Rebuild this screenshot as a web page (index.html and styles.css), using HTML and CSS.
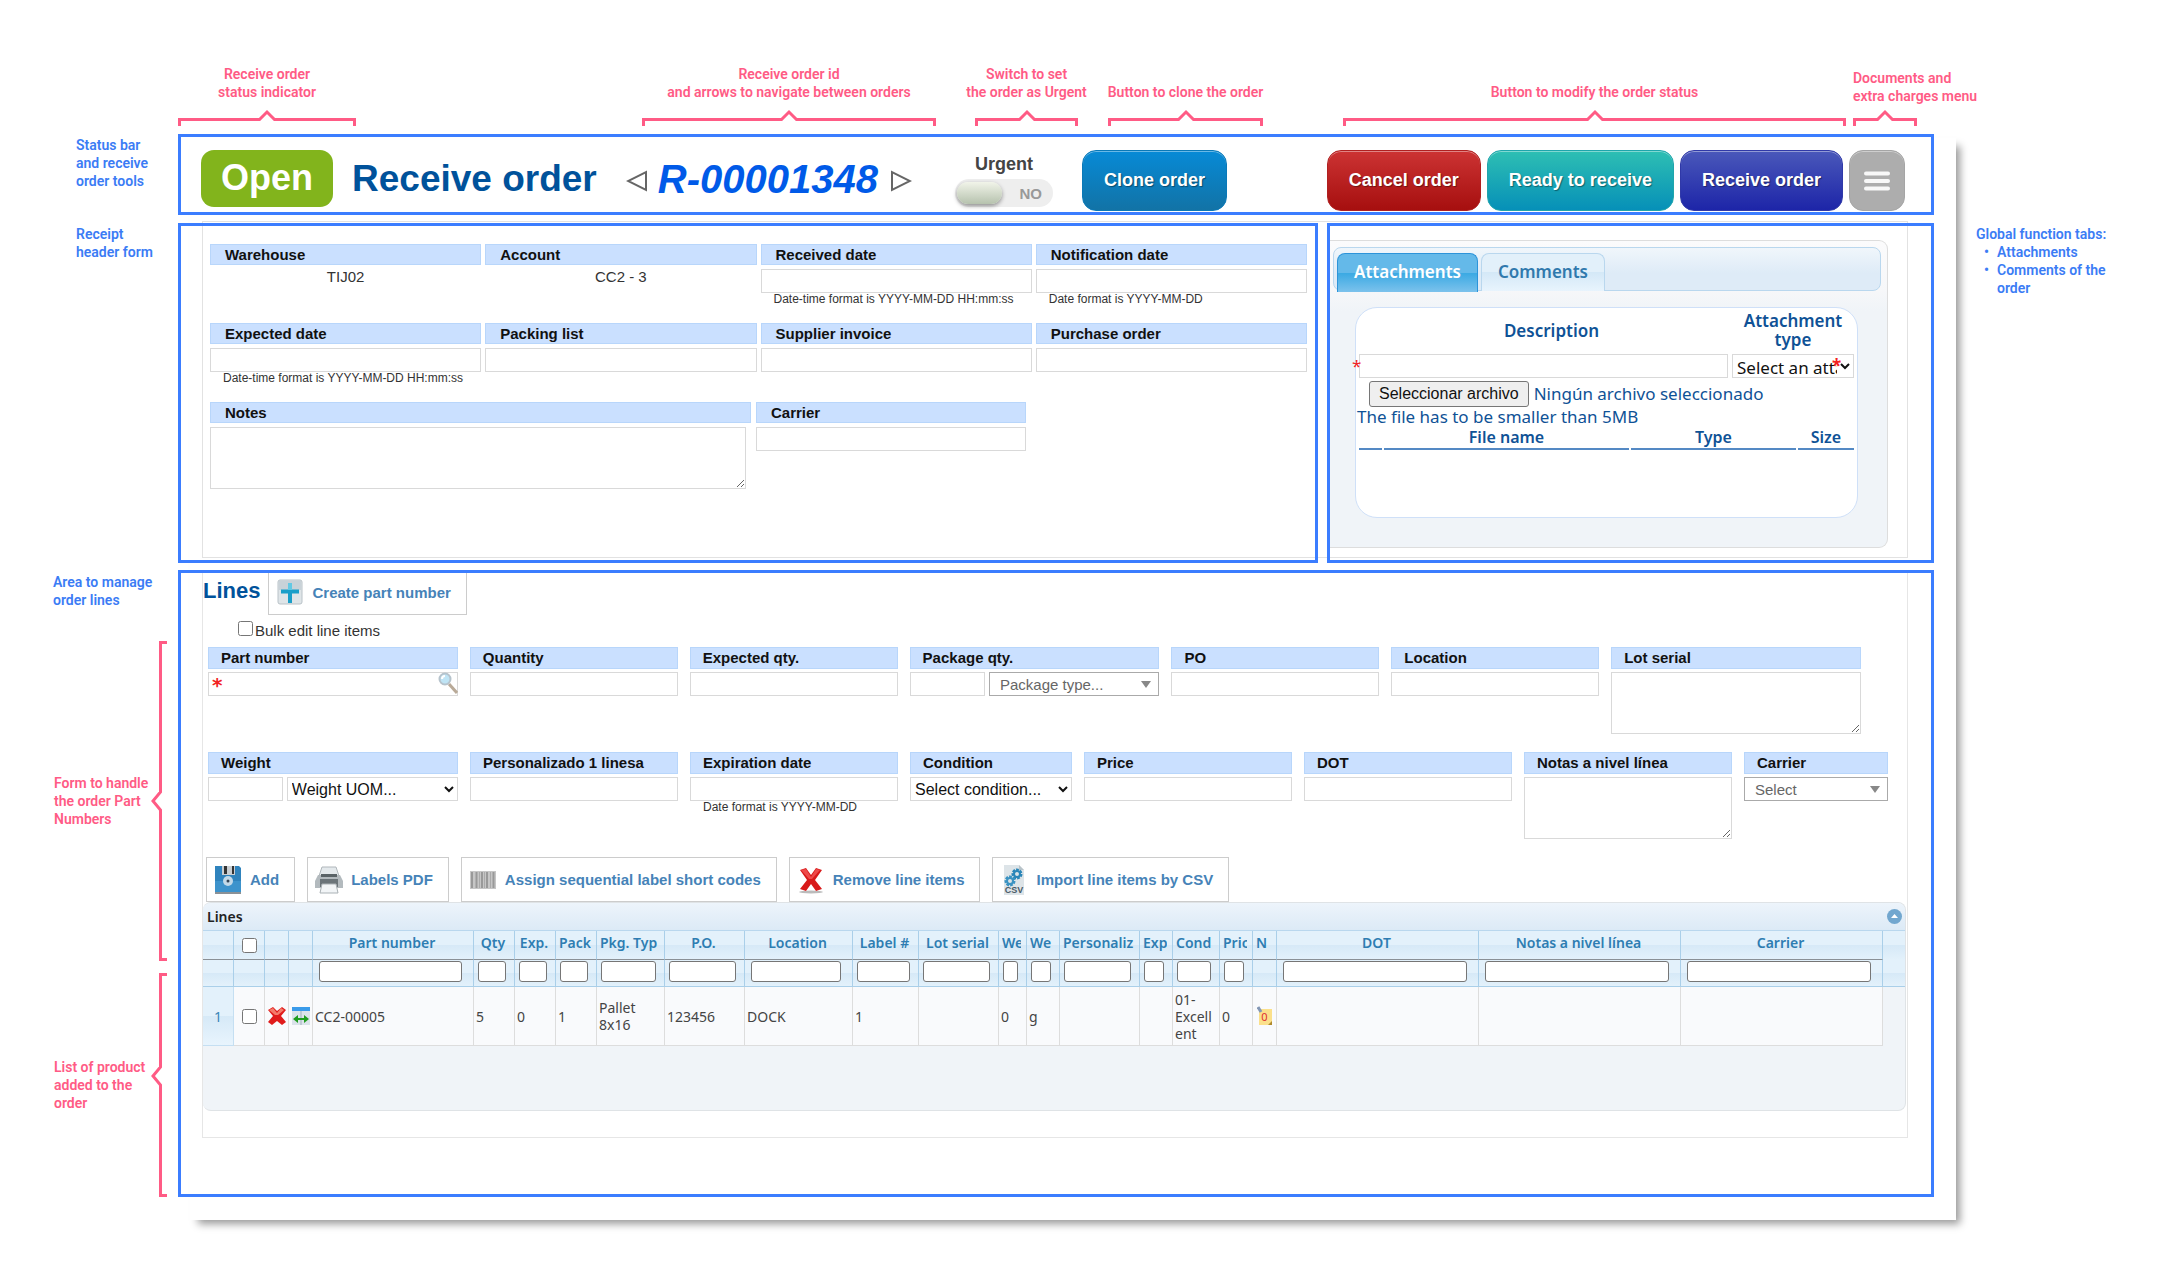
FILE: index.html
```html
<!DOCTYPE html>
<html lang="en">
<head>
    <meta charset="UTF-8">
    <title>Receive order R-00001348</title>
    <meta name="viewport" content="width=device-width, initial-scale=1">
    <link rel="stylesheet" href="styles.css">
</head>
<body>
    <div class="guide">
        <!-- callouts over the toolbar -->
        <div class="callouts">
            <div class="callout c-status">
                <p>Receive order<br>status indicator</p>
                <div class="bracket"><i></i><svg width="18" height="11" viewBox="0 0 18 11"><path d="M0 9.5h1.5L9 2l7.500 7.500H18"/></svg><i></i></div>
            </div>
            <div class="callout c-id">
                <p>Receive order id<br>and arrows to navigate between orders</p>
                <div class="bracket"><i></i><svg width="18" height="11" viewBox="0 0 18 11"><path d="M0 9.5h1.5L9 2l7.500 7.500H18"/></svg><i></i></div>
            </div>
            <div class="callout c-urgent">
                <p>Switch to set<br>the order as Urgent</p>
                <div class="bracket"><i></i><svg width="18" height="11" viewBox="0 0 18 11"><path d="M0 9.5h1.5L9 2l7.500 7.500H18"/></svg><i></i></div>
            </div>
            <div class="callout c-clone">
                <p>Button to clone the order</p>
                <div class="bracket"><i></i><svg width="18" height="11" viewBox="0 0 18 11"><path d="M0 9.5h1.5L9 2l7.500 7.500H18"/></svg><i></i></div>
            </div>
            <div class="callout c-modify">
                <p>Button to modify the order status</p>
                <div class="bracket"><i></i><svg width="18" height="11" viewBox="0 0 18 11"><path d="M0 9.5h1.5L9 2l7.500 7.500H18"/></svg><i></i></div>
            </div>
            <div class="callout c-docs">
                <p>Documents and<br>extra charges menu</p>
                <div class="bracket"><i></i><svg width="18" height="11" viewBox="0 0 18 11"><path d="M0 9.5h1.5L9 2l7.500 7.500H18"/></svg><i></i></div>
            </div>
        </div>

        <div class="sheet"></div>

        <p class="note note-status">Status bar<br>and receive<br>order tools</p>

        <header class="frame toolbar">
            <span class="status">Open</span>
            <h1>Receive order</h1>
            <div class="order-nav">
                <a href="#prev" aria-label="Previous order"><svg width="22" height="22" viewBox="0 0 22 22"><path d="M20 2v18L2 11z"/></svg></a>
                <strong>R-00001348</strong>
                <a href="#next" aria-label="Next order"><svg width="22" height="22" viewBox="0 0 22 22"><path d="M2 2v18l18-9z"/></svg></a>
            </div>
            <div class="urgent">
                <label for="urgent">Urgent</label>
                <span class="switch">
                    <input type="checkbox" id="urgent">
                    <span class="knob"></span>
                    <span class="no">NO</span>
                </span>
            </div>
            <button class="btn btn-clone">Clone order</button>
            <div class="actions">
                <button class="btn btn-cancel">Cancel order</button>
                <button class="btn btn-ready">Ready to receive</button>
                <button class="btn btn-receive">Receive order</button>
                <button class="btn btn-menu" aria-label="Menu"><svg width="28" height="24" viewBox="0 0 28 24"><path d="M3 4.500h22M3 12h22M3 19.500h22"/></svg></button>
            </div>
        </header>

        <p class="note note-receipt">Receipt<br>header form</p>

        <div class="split">
            <form class="frame header-form">
                <div class="fields">
                    <div class="field"><span class="label">Warehouse</span><span class="static">TIJ02</span></div>
                    <div class="field"><span class="label">Account</span><span class="static">CC2 - 3</span></div>
                    <div class="field"><label for="received">Received date</label><input type="text" id="received"><small>Date-time format is YYYY-MM-DD HH:mm:ss</small></div>
                    <div class="field"><label for="notification">Notification date</label><input type="text" id="notification"><small>Date format is YYYY-MM-DD</small></div>
                    <div class="field"><label for="expected">Expected date</label><input type="text" id="expected"><small>Date-time format is YYYY-MM-DD HH:mm:ss</small></div>
                    <div class="field"><label for="packing">Packing list</label><input type="text" id="packing"></div>
                    <div class="field"><label for="invoice">Supplier invoice</label><input type="text" id="invoice"></div>
                    <div class="field"><label for="purchase">Purchase order</label><input type="text" id="purchase"></div>
                </div>
                <div class="fields fields-notes">
                    <div class="field notes"><label for="notes">Notes</label><textarea id="notes"></textarea></div>
                    <div class="field"><label for="carrier">Carrier</label><input type="text" id="carrier"></div>
                </div>
            </form>

            <div class="frame tabs-frame">
                <div class="tabs">
                    <nav>
                        <a class="active" href="#attachments">Attachments</a>
                        <a href="#comments">Comments</a>
                    </nav>
                    <div class="attachments" id="attachments">
                        <div class="attach-row">
                            <label class="desc" for="description">Description</label>
                            <label for="attach-type">Attachment type</label>
                            <span class="required"><b>*</b><input type="text" id="description"></span>
                            <span class="required req-right"><select id="attach-type"><option>Select an attachment type</option></select><b>*</b></span>
                        </div>
                        <div class="file-row">
                            <button type="button">Seleccionar archivo</button>
                            <span>Ningún archivo seleccionado</span>
                        </div>
                        <p>The file has to be smaller than 5MB</p>
                        <table class="files">
                            <thead>
                                <tr><th class="w-pick"></th><th class="w-name">File name</th><th class="w-type">Type</th><th>Size</th></tr>
                            </thead>
                        </table>
                    </div>
                </div>
            </div>
        </div>

        <div class="note note-right">
            Global function tabs:
            <ul>
                <li>Attachments</li>
                <li>Comments of the order</li>
            </ul>
        </div>

        <div class="line-notes">
            <p>Area to manage<br>order lines</p>
            <div class="side side-form">
                <p>Form to handle<br>the order Part<br>Numbers</p>
                <div class="v-bracket"><i></i><svg width="11" height="20" viewBox="0 0 11 20"><path d="M9.500 0v1L2 10l7.500 9v1"/></svg><i></i></div>
            </div>
            <div class="side side-list">
                <p>List of product<br>added to the<br>order</p>
                <div class="v-bracket"><i></i><svg width="11" height="20" viewBox="0 0 11 20"><path d="M9.500 0v1L2 10l7.500 9v1"/></svg><i></i></div>
            </div>
        </div>

        <section class="frame lines">
            <div class="lines-panel">
                <div class="lines-head">
                    <h2>Lines</h2>
                    <button class="tool">
                        <svg width="28" height="28" viewBox="0 0 28 28"><rect x="2" y="2" width="24" height="24" rx="2" fill="#dfe5e8" stroke="#b9c2c8"/><path d="M3 3h22v9H3z" fill="#c9d2d8"/><path d="M14 5v20M5 13.500h18" stroke="#1b9fc9" stroke-width="4"/><path d="M14 5v7" stroke="#63c9e4" stroke-width="4"/></svg>
                        Create part number
                    </button>
                </div>
                <div class="bulk"><input type="checkbox" id="bulk"><label for="bulk">Bulk edit line items</label></div>

                <form class="line-form">
                    <div class="row row-short">
                        <div class="field wide"><label for="part">Part number</label>
                            <span class="search">
                                <b>*</b><input type="text" id="part">
                                <svg width="20" height="24" viewBox="0 0 20 24"><path d="M11 12l8 9" stroke="#b9aa98" stroke-width="3"/><circle cx="7" cy="7" r="5.500" fill="#bfe4f5" stroke="#b6c3cc" stroke-width="2"/><path d="M4 7a3 3 0 0 1 3-3" stroke="#fff" stroke-width="2" fill="none"/></svg>
                            </span>
                        </div>
                        <div class="field"><label for="qty">Quantity</label><input type="text" id="qty"></div>
                        <div class="field"><label for="exp-qty">Expected qty.</label><input type="text" id="exp-qty"></div>
                        <div class="field wide"><label for="pkg-qty">Package qty.</label>
                            <div class="pair">
                                <input type="text" id="pkg-qty">
                                <span class="combo"><select aria-label="Package type"><option>Package type...</option></select></span>
                            </div>
                        </div>
                        <div class="field"><label for="po">PO</label><input type="text" id="po"></div>
                        <div class="field"><label for="location">Location</label><input type="text" id="location"></div>
                        <div class="field wide"><label for="lot">Lot serial</label><textarea id="lot"></textarea></div>
                    </div>
                    <div class="row">
                        <div class="field wide"><label for="weight">Weight</label>
                            <div class="pair">
                                <input type="text" id="weight">
                                <select aria-label="Weight UOM"><option>Weight UOM...</option></select>
                            </div>
                        </div>
                        <div class="field"><label for="custom1">Personalizado 1 linesa</label><input type="text" id="custom1"></div>
                        <div class="field"><label for="expiration">Expiration date</label><input type="text" id="expiration"><small>Date format is YYYY-MM-DD</small></div>
                        <div class="field condition"><label for="condition">Condition</label><select id="condition"><option>Select condition...</option></select></div>
                        <div class="field"><label for="price">Price</label><input type="text" id="price"></div>
                        <div class="field"><label for="dot">DOT</label><input type="text" id="dot"></div>
                        <div class="field"><label for="line-notes">Notas a nivel línea</label><textarea id="line-notes"></textarea></div>
                        <div class="field narrow"><label for="line-carrier">Carrier</label><span class="combo"><select id="line-carrier"><option>Select</option></select></span></div>
                    </div>
                </form>

                <div class="tools">
                    <button class="tool">
                        <svg width="28" height="30" viewBox="0 0 28 30"><path d="M1 26h26v3H1z" fill="#8b9196"/><path d="M2 1h23l2 2v24H1V1z" fill="#2f83bd"/><path d="M1 16h26v11H1z" fill="#3d93cc"/><path d="M8 1h13v9H8z" fill="#c9ced2"/><path d="M10 1h3v8h-3zM18 1h2v8h-2z" fill="#333"/><circle cx="14" cy="16" r="5" fill="#c3d9e8"/><circle cx="14" cy="16" r="1.500" fill="#345"/></svg>
                        Add
                    </button>
                    <button class="tool">
                        <svg width="28" height="30" viewBox="0 0 28 30"><path d="M7 2h14l3 9H4z" fill="#e4e9ec" stroke="#b0b7bb"/><path d="M3 10h22l3 6v7H0v-7z" fill="#b3babe"/><path d="M6 9h16v3H6z" fill="#5a6367"/><path d="M5 14h18v8H5z" fill="#6b7479"/><path d="M7 19h14l2 9H5z" fill="#f2f5f7" stroke="#aab1b5"/></svg>
                        Labels PDF
                    </button>
                    <button class="tool">
                        <svg width="28" height="30" viewBox="0 0 28 30"><path d="M1 6h26v18H1z" fill="#c6c6c6"/><path d="M3 7v16M7.500 7v16M13 7v16M18 7v16M24.500 7v16" stroke="#999" stroke-width="2"/><path d="M10.500 7v16M15.500 7v16M21.500 7v16" stroke="#aaa"/></svg>
                        Assign sequential label short codes
                    </button>
                    <button class="tool">
                        <svg width="28" height="30" viewBox="0 0 28 30"><ellipse cx="14" cy="27" rx="12" ry="1.500" fill="#bbb"/><path d="M3 5l6-2 5 7 5-7 6 2-7 10 7 9-6 2-5-7-5 7-6-2 7-9z" fill="#d81a1a"/><path d="M4 5l5-1 5 8 5-8 4 1-8 9h-3z" fill="#ee4a4a"/></svg>
                        Remove line items
                    </button>
                    <button class="tool">
                        <svg width="28" height="32" viewBox="0 0 28 32"><path d="M4 1h15l5 5v25H4z" fill="#dde4e8"/><path d="M19 1v5h5z" fill="#b8c3c9"/><circle cx="17" cy="10" r="4" fill="none" stroke="#2b86b8" stroke-width="3" stroke-dasharray="2.500 1"/><circle cx="17" cy="10" r="3" fill="none" stroke="#2b86b8" stroke-width="2"/><circle cx="10" cy="17" r="4" fill="none" stroke="#3b93c2" stroke-width="3" stroke-dasharray="2.500 1"/><circle cx="10" cy="17" r="3" fill="none" stroke="#3b93c2" stroke-width="2"/><text x="14" y="29" text-anchor="middle">CSV</text></svg>
                        Import line items by CSV
                    </button>
                </div>

                <div class="grid-view">
                    <div class="grid-title">
                        <span>Lines</span>
                        <button aria-label="Collapse"><svg width="15" height="15" viewBox="0 0 15 15"><circle cx="7.500" cy="7.500" r="7.500" fill="#72a7cf"/><path d="M4 9l3.500-4L11 9z" fill="#fff"/></svg></button>
                    </div>
                    <table class="grid">
                        <colgroup>
                            <col class="w31"><col class="w31"><col class="w24"><col class="w24"><col class="w161"><col class="w41"><col class="w41"><col class="w41"><col class="w68"><col class="w80"><col class="w108"><col class="w66"><col class="w80"><col class="w28"><col class="w33"><col class="w80"><col class="w33"><col class="w47"><col class="w33"><col class="w24"><col><col><col><col class="w22">
                        </colgroup>
                        <thead>
                            <tr>
                                <th></th>
                                <th><input type="checkbox" aria-label="Select all"></th>
                                <th></th>
                                <th></th>
                                <th>Part number</th>
                                <th>Qty</th>
                                <th>Exp.</th>
                                <th><div>Pack</div></th>
                                <th><div>Pkg. Typ</div></th>
                                <th>P.O.</th>
                                <th>Location</th>
                                <th>Label #</th>
                                <th>Lot serial</th>
                                <th><div>We</div></th>
                                <th><div>We</div></th>
                                <th><div>Personaliz</div></th>
                                <th><div>Exp</div></th>
                                <th><div>Cond</div></th>
                                <th><div>Pric</div></th>
                                <th><div>N</div></th>
                                <th>DOT</th>
                                <th>Notas a nivel línea</th>
                                <th>Carrier</th>
                                <th class="rest"></th>
                            </tr>
                            <tr class="filters">
                                <td></td>
                                <td></td>
                                <td></td>
                                <td></td>
                                <td class="roomy"><input type="text" aria-label="Part number"></td>
                                <td><input type="text" aria-label="Qty"></td>
                                <td><input type="text" aria-label="Exp."></td>
                                <td><input type="text" aria-label="Pack"></td>
                                <td><input type="text" aria-label="Pkg. Type"></td>
                                <td><input type="text" aria-label="P.O."></td>
                                <td class="roomy"><input type="text" aria-label="Location"></td>
                                <td><input type="text" aria-label="Label #"></td>
                                <td><input type="text" aria-label="Lot serial"></td>
                                <td><input type="text" aria-label="Weight"></td>
                                <td><input type="text" aria-label="Weight UOM"></td>
                                <td><input type="text" aria-label="Personalizado"></td>
                                <td><input type="text" aria-label="Expiration"></td>
                                <td><input type="text" aria-label="Condition"></td>
                                <td><input type="text" aria-label="Price"></td>
                                <td></td>
                                <td class="roomy"><input type="text" aria-label="DOT"></td>
                                <td class="roomy"><input type="text" aria-label="Notas a nivel línea"></td>
                                <td class="roomy"><input type="text" aria-label="Carrier"></td>
                                <td class="rest"></td>
                            </tr>
                        </thead>
                        <tbody>
                            <tr>
                                <td class="num">1</td>
                                <td class="mid"><input type="checkbox" aria-label="Select line 1"></td>
                                <td class="mid"><svg width="20" height="20" viewBox="0 0 20 20"><path d="M1 4l5-3 4 4 5-4 4 3-5 6 5 6-4 3-5-4-5 4-4-3 5-6z" fill="#e01b1b"/><path d="M2 4l4-2 4 5 4-5 3 2-6 5H8z" fill="#f47a6a"/></svg></td>
                                <td class="mid"><svg width="18" height="18" viewBox="0 0 18 18"><rect width="18" height="18" fill="#dbe3ea"/><path d="M0 0h18v4H0z" fill="#3a9bea"/><path d="M9 4v14" stroke="#9fb0bd"/><path d="M1 12l5-4v3h6V8l5 4-5 4v-3H6v3z" fill="#1f9d1f"/></svg></td>
                                <td>CC2-00005</td>
                                <td>5</td>
                                <td>0</td>
                                <td>1</td>
                                <td>Pallet 8x16</td>
                                <td>123456</td>
                                <td>DOCK</td>
                                <td>1</td>
                                <td></td>
                                <td>0</td>
                                <td>g</td>
                                <td></td>
                                <td></td>
                                <td>01-Excellent</td>
                                <td>0</td>
                                <td class="mid"><span class="sticky"><svg width="16" height="20" viewBox="0 0 16 20"><path d="M2 3h13v16H2z" fill="#fbe08b"/><path d="M15 15v4h-4z" fill="#b08a2c"/><path d="M1 1l3 5" stroke="#8397b5" stroke-width="3"/></svg><em>0</em></span></td>
                                <td></td>
                                <td></td>
                                <td></td>
                                <td class="rest"></td>
                            </tr>
                        </tbody>
                    </table>
                </div>
            </div>
        </section>
    </div>
</body>
</html>
```
FILE: styles.css
```css
* {
    box-sizing: border-box;
}
body {
    margin: 0;
    background: #ffffff;
    font-family: "Liberation Sans", Arial, sans-serif;
    font-size: 15px;
    color: #333333;
}
p, h1, h2, ul {
    margin: 0;
    padding: 0;
}
input, select, textarea, button {
    font-family: inherit;
    margin: 0;
}
.guide {
    display: grid;
    grid-template-columns: 178px 1fr 232px;
    row-gap: 8px;
    padding-bottom: 60px;
}

/* callouts and notes */
.callouts, .note, .line-notes {
    font-family: Roboto, sans-serif;
    font-size: 14px;
    font-weight: 600;
    line-height: 18px;
}
.callouts {
    grid-column: 2;
    grid-row: 1;
    display: grid;
    grid-template-columns: 178fr 286fr 294fr 39fr 103fr 30fr 155fr 80fr 503fr 7fr 64fr 17fr;
    align-items: end;
    height: 126px;
    color: #ff5b85;
}
.callout {
    display: flex;
    flex-direction: column;
    align-items: center;
    gap: 10px;
    min-width: 0;
    text-align: center;
    white-space: nowrap;
}
.c-status { grid-column: 1; }
.c-id { grid-column: 3; }
.c-urgent { grid-column: 5; }
.c-clone { grid-column: 7; }
.c-modify { grid-column: 9; }
.c-docs {
    grid-column: 11;
    align-items: flex-start;
    gap: 6px;
    text-align: left;
}
.bracket {
    display: flex;
    align-items: flex-start;
    width: 100%;
    height: 15px;
}
.bracket i {
    flex: 1;
    height: 8px;
    margin-top: 7px;
    border-top: 3px solid #ff5b85;
    border-left: 3px solid #ff5b85;
}
.bracket svg + i {
    border-left: 0;
    border-right: 3px solid #ff5b85;
}
.bracket path, .v-bracket path {
    fill: none;
    stroke: #ff5b85;
    stroke-width: 3;
}
.bracket svg {
    overflow: visible;
    margin-top: -1px;
}
.note {
    color: #3b7cf5;
}
.note-status, .note-receipt {
    grid-column: 1;
    grid-row: 2;
    padding: 2px 0 0 76px;
}
.note-receipt {
    grid-row: 3;
}
.note-right {
    grid-column: 3;
    grid-row: 3;
    padding: 2px 50px 0 42px;
    z-index: 1;
}
.note-right ul {
    padding-left: 21px;
    list-style: none;
}
.note-right li {
    position: relative;
}
.note-right li::before {
    content: "•";
    position: absolute;
    left: -13px;
}
.line-notes {
    grid-column: 1;
    grid-row: 4;
    display: flex;
    flex-direction: column;
    padding-top: 2px;
}
.line-notes > p {
    padding-left: 53px;
    color: #3b7cf5;
}
.side {
    display: flex;
    align-items: center;
    justify-content: space-between;
    padding: 0 11px 0 54px;
    color: #ff5b85;
}
.side-form {
    height: 320px;
    margin: 32px 0 12px;
}
.side-list {
    flex: 1;
}
.side p {
    white-space: nowrap;
}
.v-bracket {
    display: flex;
    flex-direction: column;
    align-items: flex-start;
    align-self: stretch;
    width: 16px;
}
.v-bracket i {
    flex: 1;
    width: 8px;
    margin-left: 8px;
    border-top: 3px solid #ff5b85;
    border-left: 3px solid #ff5b85;
}
.v-bracket svg + i {
    border-top: 0;
    border-bottom: 3px solid #ff5b85;
}
.side-list .v-bracket i {
    flex: 10;
}
.side-list .v-bracket svg + i {
    flex: 12;
}

/* the sheet lies behind all the frames */
.sheet {
    grid-column: 2;
    grid-row: 2 / 5;
    margin: 4px -22px -23px 12px;
    background: #ffffff;
    box-shadow: 6px 6px 8px -2px rgba(0, 0, 0, 0.4);
}
.frame {
    border: 3px solid #3b7dff;
}

/* toolbar */
.toolbar {
    grid-column: 2;
    grid-row: 2;
    display: flex;
    align-items: center;
    height: 81px;
    padding: 12px 26px 0 20px;
    z-index: 1;
}
.status {
    width: 132px;
    height: 57px;
    margin-bottom: 4px;
    border-radius: 13px;
    background: #82b41c;
    color: #ffffff;
    font-size: 36px;
    font-weight: bold;
    line-height: 55px;
    text-align: center;
}
.toolbar h1 {
    margin: 0 29px 4px 19px;
    color: #00529b;
    font-size: 37px;
    line-height: 44px;
    white-space: nowrap;
}
.order-nav {
    display: flex;
    align-items: center;
    gap: 10px;
}
.order-nav a {
    height: 22px;
}
.order-nav path {
    fill: #ffffff;
    stroke: #666666;
    stroke-width: 2;
}
.order-nav strong {
    margin: 0 2px 4px 0;
    color: #005ae8;
    font-size: 40px;
    font-style: italic;
    line-height: 44px;
}
.urgent {
    display: flex;
    flex-direction: column;
    align-items: center;
    gap: 4px;
    margin: 0 29px 0 43px;
    color: #444444;
    font-size: 18px;
    font-weight: bold;
}
.switch {
    position: relative;
    display: flex;
    align-items: center;
    justify-content: space-between;
    width: 98px;
    height: 28px;
    padding: 0 11px 0 2px;
    border-radius: 14px;
    background: #eeeeee;
}
.switch input {
    position: absolute;
    inset: 0;
    width: 100%;
    height: 100%;
    opacity: 0;
}
.knob {
    width: 45px;
    height: 22px;
    border-radius: 11px;
    background: linear-gradient(#f1f4e9, #b6c2ae);
    box-shadow: 0 2px 4px rgba(0, 0, 0, 0.4);
}
.no {
    color: #999999;
    font-size: 15px;
}
.actions {
    display: flex;
    gap: 6px;
    margin-left: auto;
}
.btn {
    height: 61px;
    padding: 0 21px;
    border: 1px solid;
    border-radius: 14px;
    color: #ffffff;
    font-size: 18px;
    font-weight: bold;
    text-shadow: 1px 1px 1px rgba(0, 0, 0, 0.4);
    box-shadow: inset 0 1px 0 rgba(255, 255, 255, 0.4);
    white-space: nowrap;
}
.btn-clone {
    border-color: #0a79b8;
    background: linear-gradient(#078ad6, #1273a6);
}
.btn-cancel {
    border-color: #b02020;
    background: linear-gradient(#cc3333, #a60f0f);
}
.btn-ready {
    border-color: #1fa5ac;
    background: linear-gradient(#2ebfb3, #0690b8);
}
.btn-receive {
    border-color: #3039a8;
    background: linear-gradient(#4a58ba, #1d25a8);
}
.btn-menu {
    width: 56px;
    padding: 0 13px;
    border-color: #a5a5a5;
    background: #adadad;
}
.btn-menu svg {
    display: block;
}
.btn-menu path {
    stroke: #f8f8f8;
    stroke-width: 4;
    stroke-linecap: round;
}

/* fields */
.field {
    min-width: 0;
}
.field label, .field .label {
    display: block;
    height: 21px;
    margin-bottom: 4px;
    padding-left: 14px;
    border: 1px solid #b8d6fb;
    background: #cae0ff;
    color: #111111;
    font-weight: bold;
    line-height: 19px;
    white-space: nowrap;
}
.field input, .field textarea, .field select {
    display: block;
    width: 100%;
    height: 24px;
    border: 1px solid #d9d9d9;
    background: #ffffff;
    font-size: 15px;
}
.field textarea {
    height: 62px;
}
.field select {
    font-size: 16px;
    color: #111111;
}
.field small {
    display: block;
    padding-left: 13px;
    font-size: 12px;
    line-height: 13px;
    white-space: nowrap;
}
.static {
    display: block;
    text-align: center;
    line-height: 16px;
}

/* receipt header */
.split {
    grid-column: 2;
    grid-row: 3;
    position: relative;
    display: grid;
    grid-template-columns: 1140fr 607fr;
    gap: 9px;
    height: 340px;
}
.split::before {
    content: "";
    position: absolute;
    inset: -2px 26px 5px 24px;
    border: 1px solid #e2e2e2;
}
.split .frame {
    position: relative;
}
.header-form {
    padding: 18px 8px 0 29px;
}
.fields {
    display: grid;
    grid-template-columns: repeat(4, 1fr);
    grid-auto-rows: 79px;
    column-gap: 4px;
}
.fields-notes {
    grid-template-columns: 541fr 270fr 276fr;
    column-gap: 5px;
}
.notes textarea {
    width: calc(100% - 5px);
}

/* attachments */
.tabs-frame {
    padding: 14px 43px 12px 0;
    color: #0f5296;
    font-family: "Noto Sans", "Open Sans", sans-serif;
    font-size: 15px;
}
.tabs {
    height: 308px;
    padding: 6px 6px 0 3px;
    border: 1px solid #dddddd;
    border-left: 0;
    border-radius: 0 9px 9px 0;
    background: linear-gradient(#fbfbfc, #f6f7f9 50px, #f0f4f8 70px);
}
.tabs nav {
    display: flex;
    align-items: flex-start;
    gap: 3px;
    height: 44px;
    padding: 5px 3px 0;
    border: 1px solid #b9d7ee;
    border-radius: 8px;
    background: linear-gradient(#f0f6fb, #deebf7 60%);
}
.tabs nav a {
    height: 38px;
    padding: 0 16px;
    border: 1px solid #b9d7ee;
    border-bottom: 0;
    border-radius: 8px 8px 0 0;
    background: linear-gradient(#e2f0fa 50%, #d4e8f7 50%, #e8f4fd);
    color: #3079ad;
    font-size: 17px;
    font-weight: 600;
    line-height: 36px;
    text-decoration: none;
}
.tabs nav .active {
    height: 39px;
    border-color: #2c94da;
    background: linear-gradient(#64b9e9 50%, #3aa9e3 50%, #7cc2ec);
    color: #ffffff;
}
.attachments {
    height: 211px;
    margin: 16px 23px 0 22px;
    padding: 3px 1px 0;
    border: 1px solid #cfe0f8;
    border-radius: 22px;
    background: #ffffff;
}
.attach-row {
    display: grid;
    grid-template-columns: 1fr 122px;
    align-items: center;
    column-gap: 4px;
    padding: 0 2px;
}
.attach-row label {
    font-size: 17px;
    font-weight: 600;
    line-height: 19px;
    text-align: center;
}
.attach-row .desc {
    padding-left: 16px;
}
.required {
    position: relative;
    display: block;
    margin-top: 5px;
}
.required b {
    position: absolute;
    left: -7px;
    top: 0;
    color: #f22222;
    font-size: 17px;
    font-weight: normal;
}
.req-right b {
    left: 100px;
    font-weight: bold;
}
.required input, .required select {
    display: block;
    width: 100%;
    height: 24px;
    border: 1px solid #d9d9d9;
    background: #ffffff;
    color: #111111;
    font-size: 15px;
}
.required select {
    font-size: 17px;
}
.file-row {
    display: flex;
    align-items: center;
    gap: 5px;
    margin: 3px 0 0 12px;
}
.file-row button {
    height: 26px;
    padding: 0 9px;
    border: 1px solid #767676;
    border-radius: 3px;
    background: #efefef;
    color: #111111;
    font-family: "Liberation Sans", Arial, sans-serif;
    font-size: 16px;
}
.file-row span, .attachments p {
    font-size: 17px;
    line-height: 20px;
}
.files {
    width: 100%;
    border-spacing: 2px 0;
    table-layout: fixed;
}
.files th {
    height: 23px;
    padding: 0;
    border-bottom: 2px solid #5489c4;
    font-size: 16px;
    font-weight: 600;
    line-height: 21px;
}
.w-pick { width: 23px; }
.w-name { width: 245px; }
.w-type { width: 165px; }

/* lines */
.lines {
    grid-column: 2;
    grid-row: 4;
    position: relative;
    margin-top: -1px;
    padding: 0 23px 56px 21px;
}
.lines-panel {
    border: 1px solid #e6e6e6;
    border-top: 0;
    padding-bottom: 26px;
}
.lines-head {
    display: flex;
    align-items: flex-start;
    gap: 8px;
}
.lines-head h2 {
    color: #00529b;
    font-size: 22px;
    line-height: 36px;
}
.lines-head .tool {
    height: 42px;
    padding-bottom: 3px;
    border-top: 0;
}
.tool {
    display: flex;
    align-items: center;
    gap: 8px;
    height: 45px;
    padding: 0 15px 0 7px;
    border: 1px solid #cccccc;
    background: #ffffff;
    color: #4683b8;
    font-size: 15px;
    font-weight: bold;
    white-space: nowrap;
}
.tool text {
    fill: #4a5a66;
    font-size: 9px;
    font-weight: bold;
}
.bulk {
    display: flex;
    align-items: center;
    height: 32px;
    padding: 0 0 2px 35px;
}
.bulk input {
    width: 15px;
    height: 15px;
    margin: 0 2px 4px 0;
}
.row {
    display: flex;
    gap: 12px;
    height: 105px;
    padding: 0 19px 0 5px;
}
.row-short {
    padding-right: 46px;
}
.row .field {
    flex: 208 1 0;
}
.row .wide {
    flex-grow: 250;
}
.row .condition {
    flex-grow: 162;
}
.row .narrow {
    flex-grow: 144;
}
.row .field label {
    height: 22px;
    margin-bottom: 3px;
    padding-left: 12px;
    line-height: 20px;
}
.pair {
    display: flex;
    gap: 4px;
}
.pair > input {
    flex: 70 1 0;
    min-width: 0;
}
.pair > span, .pair > select {
    flex: 172 1 0;
    min-width: 0;
}
.combo {
    position: relative;
    display: block;
}
.combo::after {
    content: "";
    position: absolute;
    right: 8px;
    top: 9px;
    border: 5px solid transparent;
    border-top: 7px solid #888888;
    border-bottom: 0;
}
.field .combo select {
    appearance: none;
    padding: 0 10px;
    border-color: #aaaaaa;
    color: #666666;
    font-size: 15px;
}
.search {
    position: relative;
    display: block;
}
.search b {
    position: absolute;
    left: 4px;
    top: 1px;
    color: #f22222;
    font-family: "DejaVu Sans", sans-serif;
    font-size: 20px;
}
.search svg {
    position: absolute;
    right: 0;
    top: 0;
}
.tools {
    display: flex;
    gap: 12px;
    padding-left: 3px;
}

/* grid */
.grid-view {
    min-height: 209px;
    margin-right: 1px;
    border: 1px solid #dfe3e6;
    border-left: 0;
    border-radius: 8px;
    background: #f0f4f8;
    font-family: "Noto Sans", "Open Sans", sans-serif;
    overflow: hidden;
}
.grid-title {
    display: flex;
    align-items: center;
    justify-content: space-between;
    height: 28px;
    padding: 0 3px 0 4px;
    border-bottom: 1px solid #b9d7ee;
    background: linear-gradient(#edf4fb, #dceaf6);
    color: #222222;
    font-size: 14px;
    font-weight: 600;
}
.grid-title button {
    height: 15px;
    padding: 0;
    border: 0;
    background: none;
}
.grid-title svg {
    display: block;
}
.grid {
    width: 100%;
    border-collapse: separate;
    border-spacing: 0;
    table-layout: fixed;
    font-size: 14px;
    line-height: 17px;
}
.grid th {
    height: 29px;
    padding: 0 5px 4px 3px;
    border-right: 1px solid #aacfe9;
    border-bottom: 1px solid #8a9096;
    background: linear-gradient(#e3f1fb 50%, #d6e9f7 50%, #e3f1fb);
    color: #2e7db2;
    font-size: 14px;
    font-weight: 600;
    line-height: 20px;
    overflow: hidden;
    white-space: nowrap;
}
.grid th div {
    overflow: hidden;
    text-align: left;
}
.filters td {
    height: 27px;
    padding: 0 8px 4px 4px;
    border-right: 1px solid #aacfe9;
    border-bottom: 1px solid #aacfe9;
    background: linear-gradient(#e3f1fb 50%, #d6e9f7 50%, #e3f1fb);
}
.filters .roomy {
    padding: 0 11px 4px 6px;
}
.filters input {
    display: block;
    width: 100%;
    height: 21px;
    padding: 0;
    border: 1px solid #767676;
    border-radius: 3px;
}
.grid tbody td {
    height: 59px;
    padding: 0 2px;
    border-right: 1px solid #dddddd;
    border-bottom: 1px solid #dddddd;
    background: #f9fafc;
    color: #444444;
    word-break: break-word;
}
.grid tbody .num {
    border-color: #c5dff2;
    background: linear-gradient(#e3f1fb 50%, #d6e9f7 50%, #e8f4fd);
    color: #3a85b8;
    text-align: center;
}
.grid tbody .mid {
    padding: 0;
    text-align: center;
}
.mid svg {
    display: block;
    margin: 0 auto;
}
.grid input[type="checkbox"] {
    display: block;
    width: 15px;
    height: 15px;
    margin: 0 auto;
}
.grid th input[type="checkbox"] {
    margin: 5px 0 0 5px;
}
.grid .rest {
    border-right: 0;
}
.grid th.rest {
    border-bottom: 0;
}
.grid tbody .rest {
    border: 0;
    background: #f0f4f8;
}
.sticky {
    position: relative;
    display: block;
}
.sticky em {
    position: absolute;
    left: 0;
    right: 0;
    top: 2px;
    color: #e03030;
    font-size: 11px;
    font-style: normal;
}
.w22 { width: 22px; }
.w24 { width: 24px; }
.w28 { width: 28px; }
.w31 { width: 31px; }
.w33 { width: 33px; }
.w41 { width: 41px; }
.w47 { width: 47px; }
.w66 { width: 66px; }
.w68 { width: 68px; }
.w80 { width: 80px; }
.w108 { width: 108px; }
.w161 { width: 161px; }
```
